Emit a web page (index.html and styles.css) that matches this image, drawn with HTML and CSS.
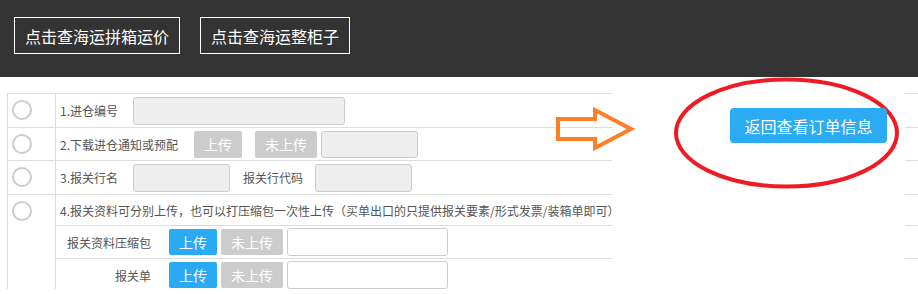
FILE: index.html
```html
<!DOCTYPE html>
<html lang="zh-CN">
<head>
    <meta charset="UTF-8">
    <title>进仓资料</title>
    <link rel="stylesheet" href="styles.css">
</head>
<body>
    <!-- 顶部 -->
    <div class="top-bar">
        <a class="top-btn" href="#">点击查海运拼箱运价</a>
        <a class="top-btn" href="#">点击查海运整柜子</a>
    </div>

    <div class="form-table">
        <div class="row row-1">
            <div class="radio-cell"><span class="radio"></span></div>
            <div class="cell">
                <span class="label label-fixed">1.进仓编号</span>
                <input class="field field-grey field-long" type="text" disabled>
            </div>
        </div>
        <div class="row row-2">
            <div class="radio-cell"><span class="radio"></span></div>
            <div class="cell">
                <span class="label">2.下载进仓通知或预配</span>
                <button class="btn btn-grey btn-up">上传</button>
                <button class="btn btn-grey btn-none btn-wide">未上传</button>
                <input class="field field-grey field-short" type="text" disabled>
            </div>
        </div>
        <div class="row row-3">
            <div class="radio-cell"><span class="radio"></span></div>
            <div class="cell">
                <span class="label label-fixed">3.报关行名</span>
                <input class="field field-grey field-short" type="text" disabled>
                <span class="label label-code">报关行代码</span>
                <input class="field field-grey field-short" type="text" disabled>
            </div>
        </div>
        <div class="row row-4">
            <div class="radio-cell"><span class="radio"></span></div>
            <div class="cell-col">
                <div class="row-head">4.报关资料可分别上传，也可以打压缩包一次性上传（买单出口的只提供报关要素/形式发票/装箱单即可）</div>
                <div class="sub-row">
                    <span class="sub-label">报关资料压缩包</span>
                    <button class="btn btn-blue">上传</button>
                    <button class="btn btn-grey btn-wide">未上传</button>
                    <input class="field field-white" type="text">
                </div>
                <div class="sub-row">
                    <span class="sub-label">报关单</span>
                    <button class="btn btn-blue">上传</button>
                    <button class="btn btn-grey btn-wide">未上传</button>
                    <input class="field field-white" type="text">
                </div>
            </div>
        </div>
    </div>

    <!-- 标注箭头 -->
    <svg class="arrow" width="90" height="50" viewBox="0 0 90 50">
        <polygon points="8,15 45,15 45,6 81,25 45,44 45,35 8,35" fill="none" stroke="#ff7f27" stroke-width="4"/>
    </svg>

    <!-- 右侧返回 -->
    <div class="back-box">
        <svg class="circle-mark" width="293" height="217" viewBox="0 0 293 217">
            <ellipse cx="174.5" cy="56" rx="110.5" ry="53.5" fill="none" stroke="#ed1c24" stroke-width="4"/>
        </svg>
        <a class="back-btn" href="#">返回查看订单信息</a>
    </div>
</body>
</html>
```

FILE: styles.css
```css
body {
    margin: 0;
    font-family: "Noto Sans CJK SC", "Microsoft YaHei", sans-serif;
    font-size: 12px;
    color: #555;
    background: #fff;
    overflow: hidden;
    position: relative;
    height: 294px;
}

.top-bar {
    height: 77px;
    box-sizing: border-box;
    background-color: #333;
    padding: 17px 0 0 14px;
    display: flex;
    gap: 20px;
    align-items: flex-start;
}

.top-btn {
    height: 37px;
    box-sizing: border-box;
    border: 1px solid #fff;
    padding: 0 10px;
    color: #fff;
    font-size: 16px;
    text-decoration: none;
    display: flex;
    align-items: center;
}

/* 表格 */
.form-table {
    margin: 16px 0 0 7px;
    width: 930px;
    height: 195px;
    overflow: hidden;
    border-top: 1px solid #ddd;
    border-left: 1px solid #ddd;
}

.row {
    display: flex;
    border-bottom: 1px solid #ddd;
}

.row-1 { height: 33px; }
.row-2 { height: 32px; }
.row-3 { height: 33px; }

.radio-cell {
    width: 48px;
    flex: none;
    border-right: 1px solid #ddd;
    padding: 6px 0 0 4px;
    box-sizing: border-box;
}

.radio {
    display: block;
    width: 20px;
    height: 20px;
    box-sizing: border-box;
    border: 2px solid #ccc;
    border-radius: 50%;
}

.cell {
    flex: 1;
    display: flex;
    align-items: center;
    padding-left: 4px;
}

.label {
    margin-right: 16px;
    white-space: nowrap;
}

.label-fixed {
    width: 73px;
    margin-right: 0;
}

.label-code {
    margin: 0 12px 0 13px;
}

.field {
    box-sizing: border-box;
    border: 1px solid #ccc;
    border-radius: 3px;
    height: 28px;
    padding: 0 6px;
    font-family: inherit;
}

.field-grey { background: #eee; }
.field-white { background: #fff; width: 161px; }
.field-long { width: 212px; }
.field-short { width: 97px; }

.btn {
    height: 26px;
    width: 48px;
    border: none;
    border-radius: 2px;
    color: #fff;
    font-size: 14px;
    font-family: inherit;
    padding: 0;
    margin-right: 4px;
    line-height: 26px;
}

.btn-grey { background: #ccc; }
.btn-blue { background: #2aaaf2; }
.btn-wide { width: 62px; }

.row-2 .btn { height: 27px; }
.row-2 .btn-up { margin-right: 13px; }
.row-2 .field { height: 27px; }

.cell-col {
    flex: 1;
    display: flex;
    flex-direction: column;
}

.row-head {
    height: 30px;
    padding-left: 4px;
    display: flex;
    align-items: center;
    white-space: nowrap;
}

.sub-row {
    height: 32px;
    border-top: 1px solid #ddd;
    display: flex;
    align-items: center;
}

.sub-label {
    width: 95px;
    text-align: right;
    margin-right: 18px;
}

/* 标注 */
.arrow {
    position: absolute;
    left: 550px;
    top: 104px;
    z-index: 3;
}

.back-box {
    position: absolute;
    left: 612px;
    top: 77px;
    width: 293px;
    height: 217px;
    background: #fff;
    box-sizing: border-box;
    padding: 31px 0 0 118px;
    z-index: 2;
}

.circle-mark {
    position: absolute;
    left: 0;
    top: 0;
}

.back-btn {
    position: relative;
    display: flex;
    align-items: center;
    justify-content: center;
    width: 157px;
    height: 35px;
    background: #2aabf3;
    border-radius: 4px;
    color: #fff;
    font-size: 16px;
    text-decoration: none;
}
```
